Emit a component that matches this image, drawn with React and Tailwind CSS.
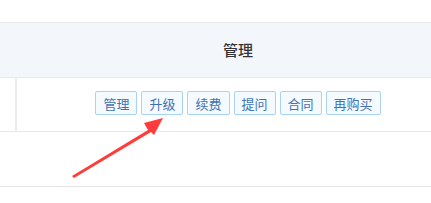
import React from "react";

const actions = ["管理", "升级", "续费", "提问", "合同", "再购买"];

export default function App() {
  return (
    <div
      className="relative w-[431px] h-[203px] overflow-hidden bg-white"
      style={{ fontFamily: '"Microsoft YaHei", "Noto Sans CJK SC", sans-serif' }}
    >
      <div className="h-[22px]" />
      {/* header */}
      <div className="flex h-[56px] border-y border-[#e8e8e8] bg-[#f3f6fb]">
        <div className="w-[17px] shrink-0" />
        <div className="w-[442px] shrink-0 flex items-center justify-center text-[15px] font-medium text-[#333]">
          管理
        </div>
      </div>
      {/* row */}
      <div className="flex h-[54px] border-b border-[#e8e8e8]">
        <div className="w-[17px] shrink-0 border-r-2 border-[#ebebeb]" />
        <div className="w-[442px] shrink-0 flex items-center justify-center gap-[4px] pb-[3px]">
          {actions.map((a) => (
            <button
              key={a}
              className="h-[24px] px-[7px] rounded-[2px] border border-[#a9d2f7] bg-[#f5faff] text-[13px] leading-none text-[#3f73b4]"
            >
              {a}
            </button>
          ))}
        </div>
      </div>
      <div className="h-[55px] border-b border-[#e8e8e8]" />
      {/* arrow */}
      <svg className="absolute left-0 top-0" width="431" height="203" viewBox="0 0 431 203">
        <polygon
          points="72,176 148,130 144,123 163,118 154,135 151,132 74,178"
          fill="#ff3b3b"
        />
      </svg>
    </div>
  );
}
